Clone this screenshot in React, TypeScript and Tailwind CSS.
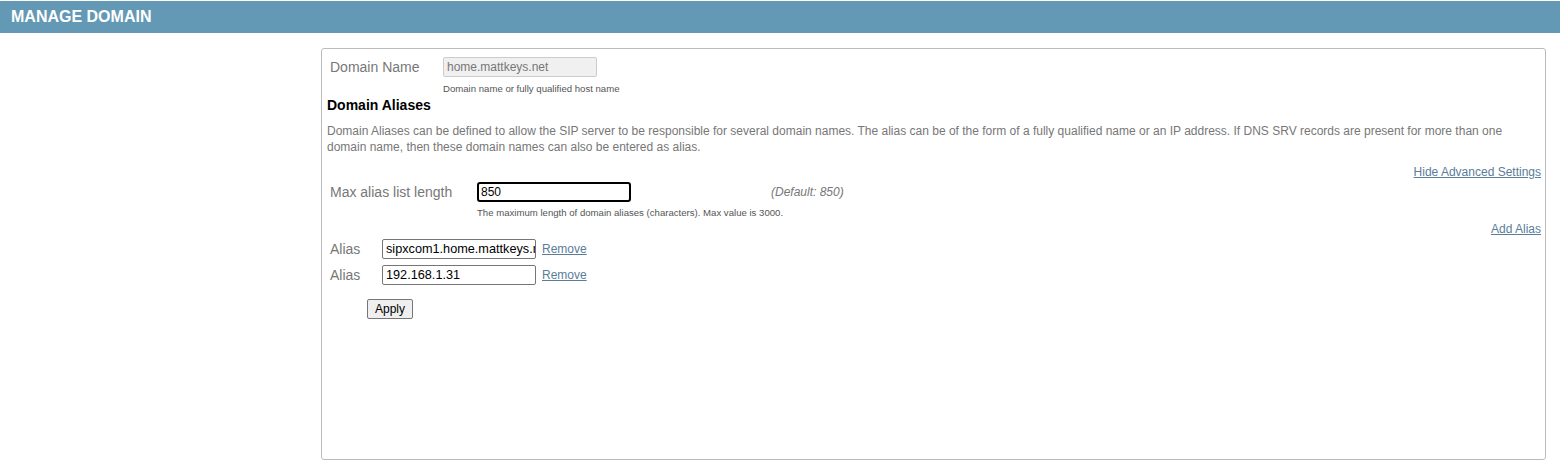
import React from 'react';

const labelCls = 'text-[14px] text-[#777]';
const linkCls = 'text-[12px] text-[#5a7d99] underline';

const AliasRow = ({ value }: { value: string }) => (
  <div className="flex items-center h-[26px]">
    <span className={`${labelCls} w-[52px]`}>Alias</span>
    <input
      readOnly
      value={value}
      className="w-[154px] h-[20px] border border-[#767676] rounded-[2px] pl-[3px] pr-0 text-[12.7px] text-black outline-none"
    />
    <a className={`${linkCls} ml-[6px]`}>Remove</a>
  </div>
);

export default function App() {
  return (
    <div className="w-[1560px] h-[473px] bg-white font-['Liberation_Sans',Arial,sans-serif]">
      <div className="pt-[1px]">
        <div className="h-[32px] bg-[#6399b5] flex items-center pl-[11px]">
          <h1 className="text-white font-bold text-[16px]">MANAGE DOMAIN</h1>
        </div>
      </div>
      <div className="ml-[321px] mr-[14px] mt-[15px] h-[412px] border border-[#bbb] rounded-[3px] pl-[5px] pr-[4px] pt-[8px]">
        <div className="flex items-center h-[20px] pl-[3px]">
          <span className={`${labelCls} w-[113px]`}>Domain Name</span>
          <input
            readOnly
            value="home.mattkeys.net"
            className="w-[154px] h-[20px] bg-[#f0f0f0] border border-[#ccc] rounded-[2px] px-[3px] text-[12px] text-[#777] outline-none"
          />
        </div>
        <div className="pl-[116px] mt-[6px] text-[9.6px] text-[#555] leading-[12px]">Domain name or fully qualified host name</div>
        <h2 className="text-[14px] font-bold text-black mt-[1px] leading-[18px]">Domain Aliases</h2>
        <p className="text-[12px] text-[#777] leading-[16px] mt-[9px]">
          Domain Aliases can be defined to allow the SIP server to be responsible for several domain names. The alias can be of the form of a fully qualified name or an IP address. If DNS SRV records are present for more than one domain name, then these domain names can also be entered as alias.
        </p>
        <div className="flex justify-end mt-[9px] leading-[16px]">
          <a className={linkCls}>Hide Advanced Settings</a>
        </div>
        <div className="flex items-center h-[20px] pl-[3px] mt-[2px]">
          <span className={`${labelCls} w-[147px]`}>Max alias list length</span>
          <input
            readOnly
            value="850"
            className="w-[154px] h-[20px] border-2 border-black rounded-[3px] px-[2px] text-[12px] text-black outline-none"
          />
          <span className="ml-[140px] text-[12px] italic text-[#777]">(Default: 850)</span>
        </div>
        <div className="pl-[150px] mt-[5px] text-[9.6px] text-[#555] leading-[12px]">The maximum length of domain aliases (characters). Max value is 3000.</div>
        <div className="flex justify-end mt-[2px] leading-[16px]">
          <a className={linkCls}>Add Alias</a>
        </div>
        <div className="pl-[3px] mt-[-1px]">
          <AliasRow value="sipxcom1.home.mattkeys.net" />
          <AliasRow value="192.168.1.31" />
        </div>
        <div className="pl-[40px] mt-[8px]">
          <button className="h-[20px] px-[7px] border border-[#767676] rounded-[2px] bg-[#efefef] text-[12px] text-black leading-none">
            Apply
          </button>
        </div>
      </div>
    </div>
  );
}
